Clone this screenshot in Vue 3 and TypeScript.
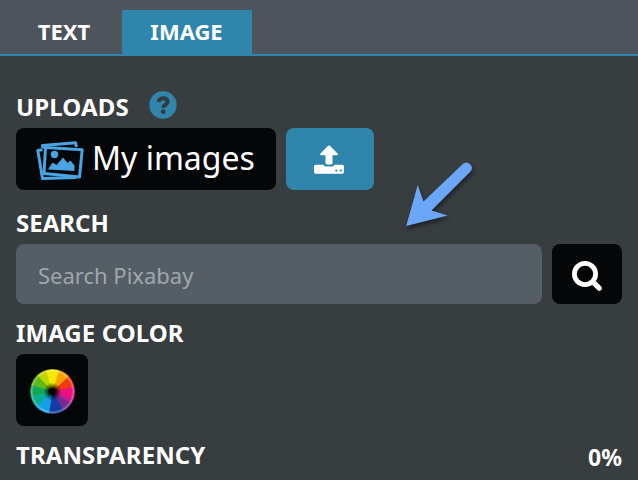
<script setup lang="ts">
import { ref } from 'vue'

const tabs = ['TEXT', 'IMAGE']
const activeTab = ref('IMAGE')
const query = ref('')
const transparency = ref(0)
</script>

<template>
  <main class="panel">
    <nav class="tabs">
      <button
        v-for="tab in tabs"
        :key="tab"
        class="tab"
        :class="{ active: tab === activeTab }"
        @click="activeTab = tab"
      >{{ tab }}</button>
    </nav>

    <div class="content">
      <section class="section uploads">
        <h2 class="label">
          <span>UPLOADS</span>
          <svg class="help" viewBox="0 0 28 28">
            <circle cx="14" cy="14" r="13.7" fill="#3085ac" />
            <path d="M9.300 10.800Q10.600 7.200 14.300 7.200Q18.500 7.200 18.500 10.800Q18.500 12.600 16.300 13.700Q14.300 14.700 14.200 16.800" fill="none" stroke="#343b3e" stroke-width="3.900" />
            <circle cx="14.200" cy="20.700" r="2.400" fill="#343b3e" />
          </svg>
        </h2>
        <div class="row">
          <button class="my-images">
            <svg class="photos" viewBox="0 0 48 40">
              <g fill="none" stroke="#48a4e2" stroke-width="3" stroke-linejoin="round">
                <path d="M6.500 8.800L1.800 9.500L6.500 37.500L40.500 36.500" />
                <path d="M7 7.500L6.500 4.500L39.500 1.700L40.500 6" />
                <path d="M9.500 6.500L46.200 8.800L43.500 36L8 32.500Z" />
              </g>
              <circle cx="18.500" cy="13.500" r="3.700" fill="#48a4e2" />
              <path d="M12 28.500L16.500 21.500L20.500 24L27 16.500L31.500 22L34.500 19.500L38.500 24.500V30L12 28.500Z" fill="#48a4e2" />
            </svg>
            <span class="my-images-text">My images</span>
          </button>
          <button class="upload" aria-label="Upload">
            <svg viewBox="0 0 30 29">
              <path d="M15 .5Q15.700 .5 16.200 1L23.500 8.600Q24.800 10.300 22.500 10.300H18.500V18Q18.500 19.400 17 19.400H13Q11.500 19.400 11.500 18V10.300H7.500Q5.200 10.300 6.500 8.600L13.800 1Q14.300 .5 15 .5Z" fill="#fff" />
              <path d="M1.700 19.700H9.600Q10.200 21.600 12.500 21.600H17.500Q19.800 21.600 20.400 19.700H28.300Q30 19.700 30 21.400V27.100Q30 28.800 28.300 28.800H1.700Q0 28.800 0 27.100V21.400Q0 19.700 1.700 19.700Z" fill="#fff" />
              <circle cx="22.300" cy="25.600" r="1.100" fill="#3085ac" />
              <circle cx="26.800" cy="25.600" r="1.100" fill="#3085ac" />
            </svg>
          </button>
        </div>
      </section>

      <section class="section">
        <h2 class="label">SEARCH</h2>
        <div class="row">
          <input v-model="query" class="field" type="text" placeholder="Search Pixabay" />
          <button class="go" aria-label="Search">
            <svg viewBox="0 0 30 30" fill="none" stroke="#fff">
              <circle cx="13" cy="13" r="10.600" stroke-width="4.800" />
              <path d="M20.800 20.800L27.200 27.200" stroke-width="5.200" stroke-linecap="round" />
            </svg>
          </button>
        </div>
      </section>

      <section class="section">
        <h2 class="label wide">IMAGE COLOR</h2>
        <button class="swatch" aria-label="Image color"><span class="wheel"></span></button>
      </section>

      <section class="section transparency">
        <h2 class="label wide">TRANSPARENCY</h2>
        <output class="value">{{ transparency }}%</output>
      </section>
    </div>

    <svg class="pointer" viewBox="0 0 80 80">
      <path d="M6.200 66L17.700 25L23.500 41.500L62.800 4A5.400 5.400 0 0 1 70.500 11.500L31.500 50.500L47.700 55.500Z" fill="#6ba6f7" />
    </svg>
  </main>
</template>

<style>
body {
  background: #383d40;
  overflow: hidden;
}
</style>

<style scoped>
.panel {
  position: relative;
  box-sizing: border-box;
  height: 480px;
  overflow: hidden;
  background: #383d40;
  color: #fff;
  font-family: "Noto Sans", sans-serif;
}
button,
input {
  box-sizing: border-box;
  margin: 0;
  padding: 0;
  border: 0;
  color: inherit;
  font-family: inherit;
}
.tabs {
  display: flex;
  align-items: flex-end;
  box-sizing: border-box;
  height: 56px;
  padding-left: 6px;
  border-bottom: 2px solid #3085ac;
  background: #4d545b;
}
.tab {
  width: 116px;
  height: 44px;
  padding-bottom: 2px;
  background: transparent;
  font-size: 22px;
  font-weight: 700;
  line-height: 42px;
}
.tab.active {
  width: 130px;
  padding-right: 1px;
  background: #3085ac;
}
.content {
  padding: 30px 16px 0;
}
.section {
  margin-bottom: 8px;
}
.uploads {
  margin-bottom: 12px;
}
.label {
  display: flex;
  align-items: center;
  height: 42px;
  margin: 0;
  font-size: 24px;
  font-weight: 700;
  line-height: 42px;
}
.label.wide {
  letter-spacing: 0.08px;
}
.uploads .label {
  letter-spacing: 0.12px;
}
.help {
  width: 28px;
  height: 28px;
  margin: -5px 0 0 20px;
}
.row {
  display: flex;
  gap: 10px;
}
.my-images {
  display: flex;
  align-items: center;
  width: 260px;
  height: 62px;
  padding-left: 20px;
  border-radius: 8px;
  background: #050607;
  font-size: 32px;
  line-height: 60px;
  white-space: nowrap;
}
.my-images-text {
  padding-bottom: 2px;
}
.photos {
  flex: none;
  width: 48px;
  height: 40px;
  margin: 3px 8px 0 0;
}
.upload {
  display: flex;
  align-items: center;
  justify-content: center;
  width: 88px;
  height: 62px;
  padding-right: 2px;
  border-radius: 8px;
  background: #3085ac;
}
.upload svg {
  width: 30px;
  height: 29px;
  margin-top: 1px;
}
.field {
  flex: 1;
  min-width: 0;
  height: 60px;
  padding: 2px 22px 0;
  border-radius: 8px;
  background: #555e64;
  font-size: 22px;
  outline: 0;
}
.field::placeholder {
  color: #a0a7ab;
  opacity: 1;
}
.go {
  display: flex;
  align-items: center;
  justify-content: center;
  width: 70px;
  height: 60px;
  border-radius: 8px;
  background: #050607;
}
.go svg {
  width: 30px;
  height: 30px;
  margin-top: 3px;
}
.swatch {
  display: flex;
  align-items: center;
  justify-content: center;
  width: 72px;
  height: 72px;
  border-radius: 8px;
  background: #050607;
}
.wheel {
  width: 45px;
  height: 45px;
  margin-top: 3px;
  border-radius: 50%;
  background:
    radial-gradient(circle, #000 0 3px, rgba(0, 0, 0, 0.55) 5px, transparent 9px),
    radial-gradient(circle, transparent 19px, rgba(255, 255, 255, 0.3) 21px, rgba(0, 0, 0, 0.3) 22.500px),
    conic-gradient(from -15deg, #f4ec00 0 30deg, #fba000 34deg 60deg, #f03a12 64deg 90deg, #ef1080 94deg 120deg, #cf168c 124deg 135deg, #732b91 139deg 163deg, #153ba6 167deg 202deg, #12a1e8 206deg 240deg, #0aad91 244deg 270deg, #12a657 274deg 300deg, #62b81b 304deg 330deg, #bdd500 334deg 356deg, #f4ec00 360deg);
}
.transparency {
  display: flex;
  justify-content: space-between;
  margin-bottom: 0;
}
.value {
  padding-top: 3px;
  font-size: 23px;
  font-weight: 700;
  line-height: 40px;
}
.pointer {
  position: absolute;
  top: 160px;
  left: 400px;
  width: 80px;
  height: 80px;
  filter: drop-shadow(1px 3px 2px rgba(0, 0, 0, 0.45));
  pointer-events: none;
}
</style>
